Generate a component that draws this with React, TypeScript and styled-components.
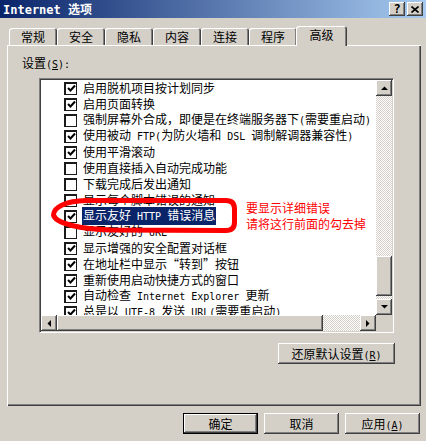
import React from "react";
import styled, { createGlobalStyle, css } from "styled-components";

const GlobalStyle = createGlobalStyle`
  html, body {
    margin: 0;
    padding: 0;
    background: #d4d0c8;
  }
  body {
    font-family: "Noto Sans CJK SC", "Noto Sans", sans-serif;
    font-size: 12px;
    color: #000;
  }
`;

const raised = css`
  background: #d4d0c8;
  box-shadow: inset -1px -1px #404040, inset 1px 1px #fff,
    inset -2px -2px #808080, inset 2px 2px #d4d0c8;
`;

type Item = { text: string; checked: boolean; selected?: boolean };

const items: Item[] = [
  { text: "启用脱机项目按计划同步", checked: true },
  { text: "启用页面转换", checked: true },
  { text: "强制屏幕外合成，即便是在终端服务器下(需要重启动)", checked: false },
  { text: "使用被动 FTP(为防火墙和 DSL 调制解调器兼容性)", checked: true },
  { text: "使用平滑滚动", checked: true },
  { text: "使用直接插入自动完成功能", checked: false },
  { text: "下载完成后发出通知", checked: false },
  { text: "显示每个脚本错误的通知", checked: false },
  { text: "显示友好 HTTP 错误消息", checked: true, selected: true },
  { text: "显示友好的 URL", checked: false },
  { text: "显示增强的安全配置对话框", checked: true },
  { text: "在地址栏中显示“转到”按钮", checked: true },
  { text: "重新使用启动快捷方式的窗口", checked: true },
  { text: "自动检查 Internet Explorer 更新", checked: true },
  { text: "总是以 UTF-8 发送 URL(需要重启动)", checked: true },
];

const tabs = ["常规", "安全", "隐私", "内容", "连接", "程序", "高级"];

function Mixed({ text }: { text: string }) {
  const parts = text.split(/([\x20-\x7e]+)/);
  return (
    <>
      {parts.map((p, i) => (i % 2 ? <Latin key={i}>{p}</Latin> : p))}
    </>
  );
}

function Arrow({ dir }: { dir: "up" | "down" | "left" | "right" }) {
  const pts = {
    up: "0,4 3.5,0.5 7,4",
    down: "0,0 7,0 3.5,3.5",
    left: "4,0 4,7 0.5,3.5",
    right: "0,0 0,7 3.5,3.5",
  }[dir];
  const vertical = dir === "up" || dir === "down";
  return (
    <svg width={vertical ? 7 : 4} height={vertical ? 4 : 7}>
      <polygon points={pts} fill="#000" />
    </svg>
  );
}

function App() {
  return (
    <>
      <GlobalStyle />
      <Window>
        <TitleBar>
          <TitleText>
            <Latin $bold $size={12}>Internet </Latin>选项
          </TitleText>
          <CaptionButton>
            <Latin $bold $size={12}>?</Latin>
          </CaptionButton>
          <CaptionButton>
            <svg width="8" height="7">
              <path d="M0.5 0.5 L7.5 6.5 M7.5 0.5 L0.5 6.5" stroke="#000" strokeWidth="1.6" />
            </svg>
          </CaptionButton>
        </TitleBar>

        <Body>
          <TabRow>
            {tabs.map((t) => (
              <Tab key={t} $active={t === "高级"}>
                {t}
              </Tab>
            ))}
          </TabRow>

          <Panel>
            <FieldLabel>
              设置<Latin>(<u>S</u>):</Latin>
            </FieldLabel>

            <ListBox>
              <ListArea>
                {items.map((it) => (
                  <Row key={it.text}>
                    <CheckBox>
                      {it.checked && (
                        <svg width="9" height="9" viewBox="0 0 9 9">
                          <path d="M1 4 L3.5 6.5 L8 1.5" stroke="#000" strokeWidth="2" fill="none" />
                        </svg>
                      )}
                    </CheckBox>
                    <RowLabel $selected={it.selected}>
                      <Mixed text={it.text} />
                    </RowLabel>
                  </Row>
                ))}
              </ListArea>

              <VScroll>
                <ArrowButton>
                  <Arrow dir="up" />
                </ArrowButton>
                <VTrack>
                  <VThumb />
                </VTrack>
                <ArrowButton>
                  <Arrow dir="down" />
                </ArrowButton>
              </VScroll>

              <HScroll>
                <ArrowButton>
                  <Arrow dir="left" />
                </ArrowButton>
                <HThumb />
                <HTrack />
                <ArrowButton>
                  <Arrow dir="right" />
                </ArrowButton>
              </HScroll>
              <Corner />

              <Mark viewBox="0 0 186 35" width="186" height="35">
                <path
                  d="M35 2.5 L175 2.5 Q183.5 2.5 183.5 11 L183.5 24 Q183.5 32.5 175 32.5 L60 32 C30 31 5 26 2.5 17 C2.5 9 15 3 35 2.5 Z"
                  fill="none"
                  stroke="#ff0000"
                  strokeWidth="5"
                  strokeLinejoin="round"
                />
              </Mark>
              <Note>
                要显示详细错误
                <br />
                请将这行前面的勾去掉
              </Note>
            </ListBox>

            <RestoreButton>
              还原默认设置<Latin>(<u>R</u>)</Latin>
            </RestoreButton>
          </Panel>

          <ButtonRow>
            <PushButton $default>确定</PushButton>
            <PushButton>取消</PushButton>
            <PushButton>
              应用<Latin>(<u>A</u>)</Latin>
            </PushButton>
          </ButtonRow>
        </Body>
      </Window>
    </>
  );
}

export default App;

const Latin = styled.span<{ $size?: number; $bold?: boolean }>`
  font-family: "DejaVu Sans Mono", "Liberation Mono", monospace;
  font-size: ${(p) => p.$size ?? 10}px;
  font-weight: ${(p) => (p.$bold ? "bold" : "normal")};
  white-space: pre;
`;

const Window = styled.div`
  width: 426px;
  height: 441px;
  background: #d4d0c8;
  display: flex;
  flex-direction: column;
  overflow: hidden;
`;

const TitleBar = styled.div`
  height: 18px;
  flex: none;
  display: flex;
  align-items: center;
  gap: 2px;
  padding: 0 3px;
  background: linear-gradient(to right, #0a246a, #a6caf0);
  color: #fff;
  font-weight: bold;
`;

const TitleText = styled.div`
  flex: 1;
  font-size: 12px;
  line-height: 18px;
  white-space: nowrap;
`;

const CaptionButton = styled.div`
  width: 16px;
  height: 14px;
  ${raised};
  display: flex;
  align-items: center;
  justify-content: center;
  color: #000;
  line-height: 14px;
`;

const Body = styled.div`
  flex: 1;
  display: flex;
  flex-direction: column;
  padding: 8px 5px 0 7px;
`;

const TabRow = styled.div`
  height: 19px;
  display: flex;
  align-items: flex-end;
  padding-left: 2px;
  position: relative;
  z-index: 1;
`;

const Tab = styled.div<{ $active?: boolean }>`
  box-sizing: border-box;
  width: ${(p) => (p.$active ? 51 : 48)}px;
  height: ${(p) => (p.$active ? 20 : 17)}px;
  margin-bottom: ${(p) => (p.$active ? -1 : 0)}px;
  margin-left: ${(p) => (p.$active ? -1 : 0)}px;
  background: #d4d0c8;
  border-radius: 3px 3px 0 0;
  box-shadow: inset 1px 1px #fff, inset -1px 0 #404040, inset -2px 0 #808080;
  display: flex;
  align-items: center;
  justify-content: center;
  padding-bottom: ${(p) => (p.$active ? 3 : 0)}px;
  font-size: 12px;
  line-height: 16px;
`;

const Panel = styled.div`
  box-sizing: border-box;
  width: 414px;
  height: 361px;
  flex: none;
  display: flex;
  flex-direction: column;
  padding: 10px 0 0 15px;
  box-shadow: inset 1px 1px #fff, inset -1px -1px #404040, inset -2px -2px #808080;
`;

const FieldLabel = styled.div`
  height: 16px;
  line-height: 16px;
`;

const ListBox = styled.div`
  position: relative;
  margin: 7px 0 0 17px;
  width: 355px;
  height: 255px;
  box-sizing: border-box;
  border: 1px solid;
  border-color: #808080 #fff #fff #808080;
  padding: 1px;
  box-shadow: inset 1px 1px #404040, inset -1px -1px #d4d0c8;
  display: grid;
  grid-template-columns: 1fr 16px;
  grid-template-rows: 1fr 16px;
`;

const ListArea = styled.div`
  background: #fff;
  overflow: hidden;
  padding: 0 0 0 23px;
`;

const Row = styled.div`
  height: 16px;
  display: flex;
  align-items: center;
  white-space: nowrap;
`;

const CheckBox = styled.div`
  box-sizing: border-box;
  width: 13px;
  height: 13px;
  flex: none;
  background: #fff;
  border: 2px solid #1a1a1a;
  border-width: 2px 1px 1px 2px;
  display: flex;
  align-items: center;
  justify-content: center;
`;

const RowLabel = styled.span<{ $selected?: boolean }>`
  margin-left: 5px;
  padding: 0 1px;
  line-height: 16px;
  background: ${(p) => (p.$selected ? "#0a246a" : "transparent")};
  color: ${(p) => (p.$selected ? "#fff" : "#000")};
`;

const ArrowButton = styled.div`
  width: 16px;
  height: 16px;
  flex: none;
  ${raised};
  display: flex;
  align-items: center;
  justify-content: center;
`;

const checker = css`
  background: repeating-conic-gradient(#fff 0 25%, #d4d0c8 0 50%) 0 0 / 2px 2px;
`;

const VScroll = styled.div`
  display: flex;
  flex-direction: column;
`;

const VTrack = styled.div`
  flex: 1;
  display: flex;
  flex-direction: column;
  justify-content: flex-end;
  padding-bottom: 3px;
  ${checker};
`;

const VThumb = styled.div`
  height: 40px;
  ${raised};
`;

const HScroll = styled.div`
  display: flex;
`;

const HThumb = styled.div`
  width: 266px;
  flex: none;
  ${raised};
`;

const HTrack = styled.div`
  flex: 1;
  ${checker};
`;

const Corner = styled.div`
  background: #d4d0c8;
`;

const Mark = styled.svg`
  position: absolute;
  left: 11px;
  top: 119px;
  pointer-events: none;
`;

const Note = styled.div`
  position: absolute;
  left: 206px;
  top: 121px;
  color: #ff0000;
  line-height: 16px;
  white-space: nowrap;
`;

const RestoreButton = styled.div`
  align-self: flex-end;
  margin: 10px 26px 0 0;
  width: 117px;
  height: 21px;
  ${raised};
  text-align: center;
  line-height: 21px;
`;

const ButtonRow = styled.div`
  display: flex;
  justify-content: flex-end;
  gap: 6px;
  margin-top: 7px;
  padding-right: 1px;
`;

const PushButton = styled.div<{ $default?: boolean }>`
  width: 75px;
  height: 21px;
  background: #d4d0c8;
  box-shadow: ${(p) =>
    p.$default
      ? "inset 0 0 0 1px #000, inset -2px -2px #404040, inset 2px 2px #fff, inset -3px -3px #808080"
      : "inset -1px -1px #404040, inset 1px 1px #fff, inset -2px -2px #808080"};
  text-align: center;
  line-height: 21px;
`;
